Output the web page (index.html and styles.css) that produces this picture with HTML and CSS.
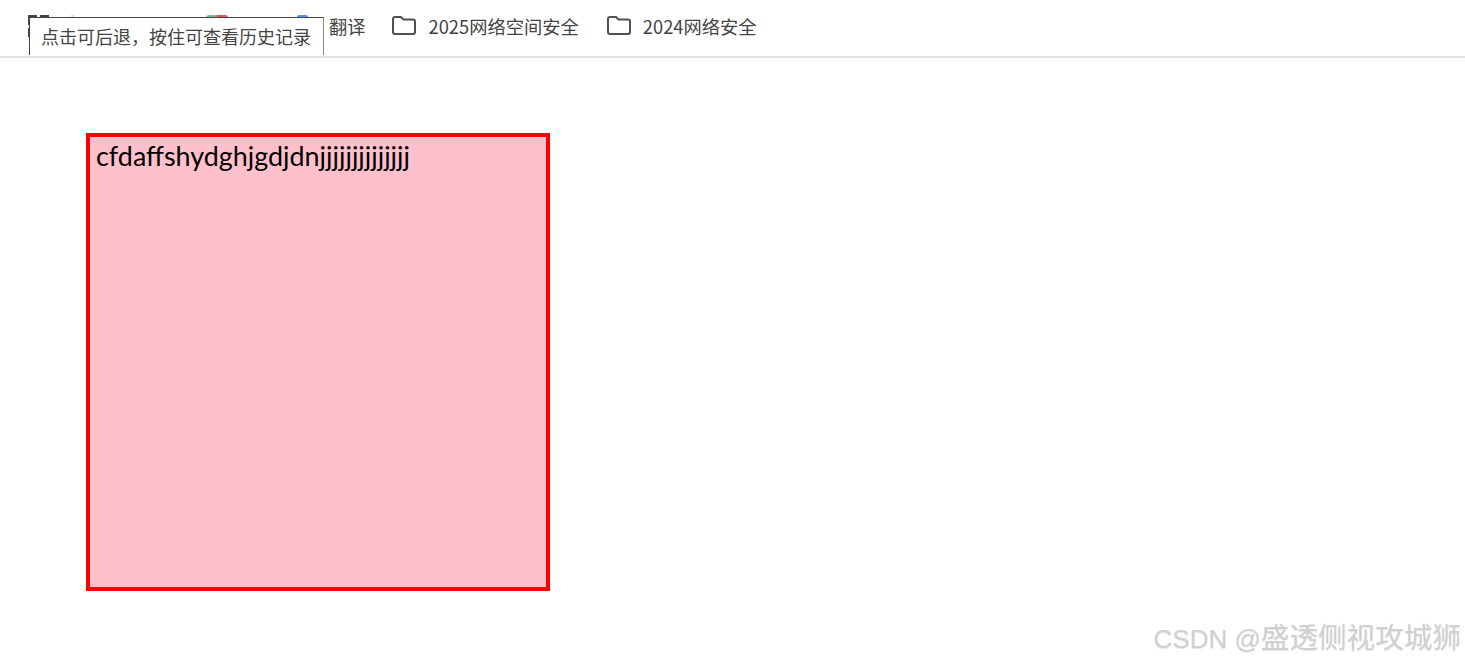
FILE: index.html
```html
<!DOCTYPE html>
<html lang="zh-CN">
<head>
<meta charset="utf-8">
<title>Demo</title>
<link rel="stylesheet" href="styles.css">
</head>
<body>
<header class="bar">
  <svg class="apps-icon" width="21" height="23" viewBox="0 0 21 23"><path d="M1.5 10V1.5H9M12 1.5h7.5V4M1.5 13v9" fill="none" stroke="#444" stroke-width="3"/></svg>
  <span class="peek peek-a"></span>
  <span class="peek peek-b"></span>
  <span class="peek peek-c"></span>
  <span class="bookmark first">翻译</span>
  <span class="bookmark folder">
    <svg class="folder-icon" width="24" height="19" viewBox="0 0 24 19"><path d="M1 3a2 2 0 0 1 2-2h6l2.6 2.6H21a2 2 0 0 1 2 2V16a2 2 0 0 1-2 2H3a2 2 0 0 1-2-2z" fill="none" stroke="#505050" stroke-width="2"/></svg>
    2025网络空间安全
  </span>
  <span class="bookmark folder">
    <svg class="folder-icon" width="24" height="19" viewBox="0 0 24 19"><path d="M1 3a2 2 0 0 1 2-2h6l2.6 2.6H21a2 2 0 0 1 2 2V16a2 2 0 0 1-2 2H3a2 2 0 0 1-2-2z" fill="none" stroke="#505050" stroke-width="2"/></svg>
    2024网络安全
  </span>
  <div class="tooltip">点击可后退，按住可查看历史记录</div>
</header>
<main class="content">
  <div class="box">cfdaffshydghjgdjdnjjjjjjjjjjjjjj</div>
</main>
<div class="watermark">CSDN @<span class="watermark-name">盛透侧视攻城狮</span></div>
</body>
</html>
```
FILE: styles.css
```css
* { box-sizing: border-box; }
html, body { margin: 0; padding: 0; height: 664px; overflow: hidden; background: #fff; }
body { position: relative; font-family: "Liberation Sans", "Noto Sans CJK SC", sans-serif; }
.bar {
  position: relative;
  height: 58px;
  border-bottom: 2px solid #e2e2e2;
  display: flex;
  align-items: center;
  padding: 0 0 4px 329px;
  gap: 26px;
  font-family: "Noto Sans CJK SC", sans-serif;
  font-size: 18.3px;
  color: #444;
}
.bookmark { display: flex; align-items: center; white-space: nowrap; line-height: 24px; }
.folder + .folder { margin-left: 2px; }
.folder-icon { margin-right: 13px; margin-top: -2px; }
.folder + .folder .folder-icon { margin-right: 12px; }
.apps-icon, .peek { position: absolute; }
.apps-icon { left: 28px; top: 15px; }
.peek { top: 15px; height: 3px; }
.peek-a { left: 71px; width: 3px; background: #d5e4f7; }
.peek-b { left: 206px; width: 22px; background: linear-gradient(90deg, #7fb897 0 50%, #e0584a 50% 100%); border-radius: 3px 3px 0 0; }
.peek-c { left: 297px; width: 11px; background: #5a8df0; border-radius: 2px 2px 0 0; }
.tooltip {
  position: absolute;
  left: 29px;
  top: 17px;
  width: 295px;
  height: 38px;
  background: #fff;
  border: 1px solid #8a8a8a;
  border-top-color: #444;
  border-left-color: #444;
  border-bottom: 0;
  padding-left: 11px;
  font-size: 18px;
  line-height: 36px;
  white-space: nowrap;
  color: #444;
}
.content { padding: 75px 0 0 86px; }
.box {
  width: 464px;
  height: 458px;
  border: 4px solid #f00;
  background: #ffc0cb;
  padding: 2px 6px;
  font-family: Lato, sans-serif;
  font-size: 26.9px;
  line-height: 34px;
  color: #000;
}
.watermark {
  position: absolute;
  right: 4px;
  top: 620px;
  font-size: 26px;
  line-height: 36px;
  color: #d0d0d0;
  white-space: nowrap;
  font-family: "Liberation Sans", "Noto Sans CJK SC", sans-serif;
  text-shadow: 0 1px 1px rgba(0,0,0,.1);
}
.watermark-name { font-size: 28.6px; }
```
